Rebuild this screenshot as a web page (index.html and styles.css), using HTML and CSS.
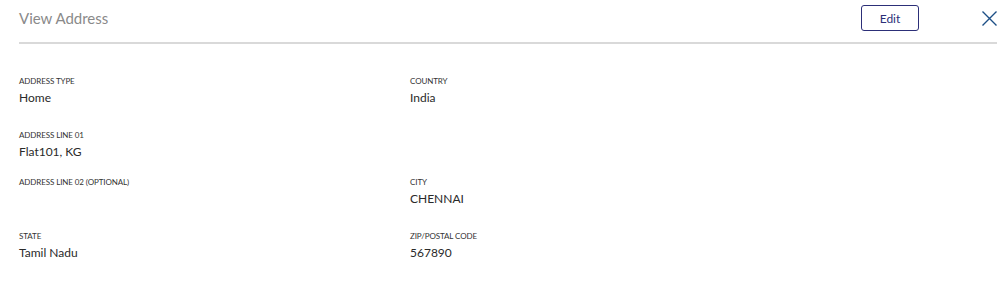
FILE: index.html
```html
<!DOCTYPE html>
<html lang="en">
<head>
<meta charset="utf-8">
<title>View Address</title>
<link rel="stylesheet" href="styles.css">
</head>
<body>
<div class="panel">
  <header class="header">
    <h1 class="title">View Address</h1>
    <button class="btn-edit" type="button">Edit</button>
    <button class="btn-close" type="button" aria-label="Close">
      <svg width="15" height="15" viewBox="0 0 15 15"><path d="M0.5 0.5 L14.5 14.5 M14.5 0.5 L0.5 14.5" stroke="#1d4f86" stroke-width="1.4" fill="none"/></svg>
    </button>
  </header>
  <section class="grid">
    <div class="field"><div class="label">Address Type</div><div class="value">Home</div></div>
    <div class="field"><div class="label">Country</div><div class="value">India</div></div>
    <div class="field"><div class="label">Address Line 01</div><div class="value">Flat101, KG</div></div>
    <div class="field"></div>
    <div class="field"><div class="label">Address Line 02 (Optional)</div><div class="value"></div></div>
    <div class="field"><div class="label">City</div><div class="value">CHENNAI</div></div>
    <div class="field"><div class="label">State</div><div class="value">Tamil Nadu</div></div>
    <div class="field"><div class="label">Zip/Postal Code</div><div class="value">567890</div></div>
  </section>
</div>
</body>
</html>
```
FILE: styles.css
```css
html, body {
  margin: 0;
  padding: 0;
  background: #ffffff;
}
body {
  font-family: Lato, "Open Sans", "Liberation Sans", sans-serif;
  color: #222;
}
.panel {
  padding: 0 10px 0 19px;
}
.header {
  display: flex;
  align-items: flex-start;
  padding-top: 5px;
  padding-bottom: 11px;
  border-bottom: 2px solid #d9d9d9;
}
.title {
  flex: 1;
  margin: 0;
  font-size: 15px;
  line-height: 26px;
  font-weight: 400;
  color: #8a8a8a;
}
.btn-edit {
  width: 58px;
  height: 26px;
  box-sizing: border-box;
  border: 1px solid #2c2f78;
  border-radius: 3px;
  background: #fff;
  color: #2c2f78;
  font-family: Lato, "Open Sans", sans-serif;
  font-size: 12px;
  padding: 0;
  margin-right: 63px;
}
.btn-close {
  border: 0;
  background: none;
  padding: 0;
  margin-top: 6px;
  width: 15px;
  height: 15px;
  display: block;
}
.btn-close svg { display: block; }
.grid {
  display: grid;
  grid-template-columns: 391px 1fr;
  grid-template-rows: 54px 47px 54px auto;
  margin-top: 32px;
}
.label {
  font-size: 8px;
  line-height: 10px;
  text-transform: uppercase;
  color: #333;
  letter-spacing: -0.1px;
}
.value {
  margin-top: 4px;
  font-size: 12px;
  line-height: 16px;
  color: #2a2a2a;
}
```
